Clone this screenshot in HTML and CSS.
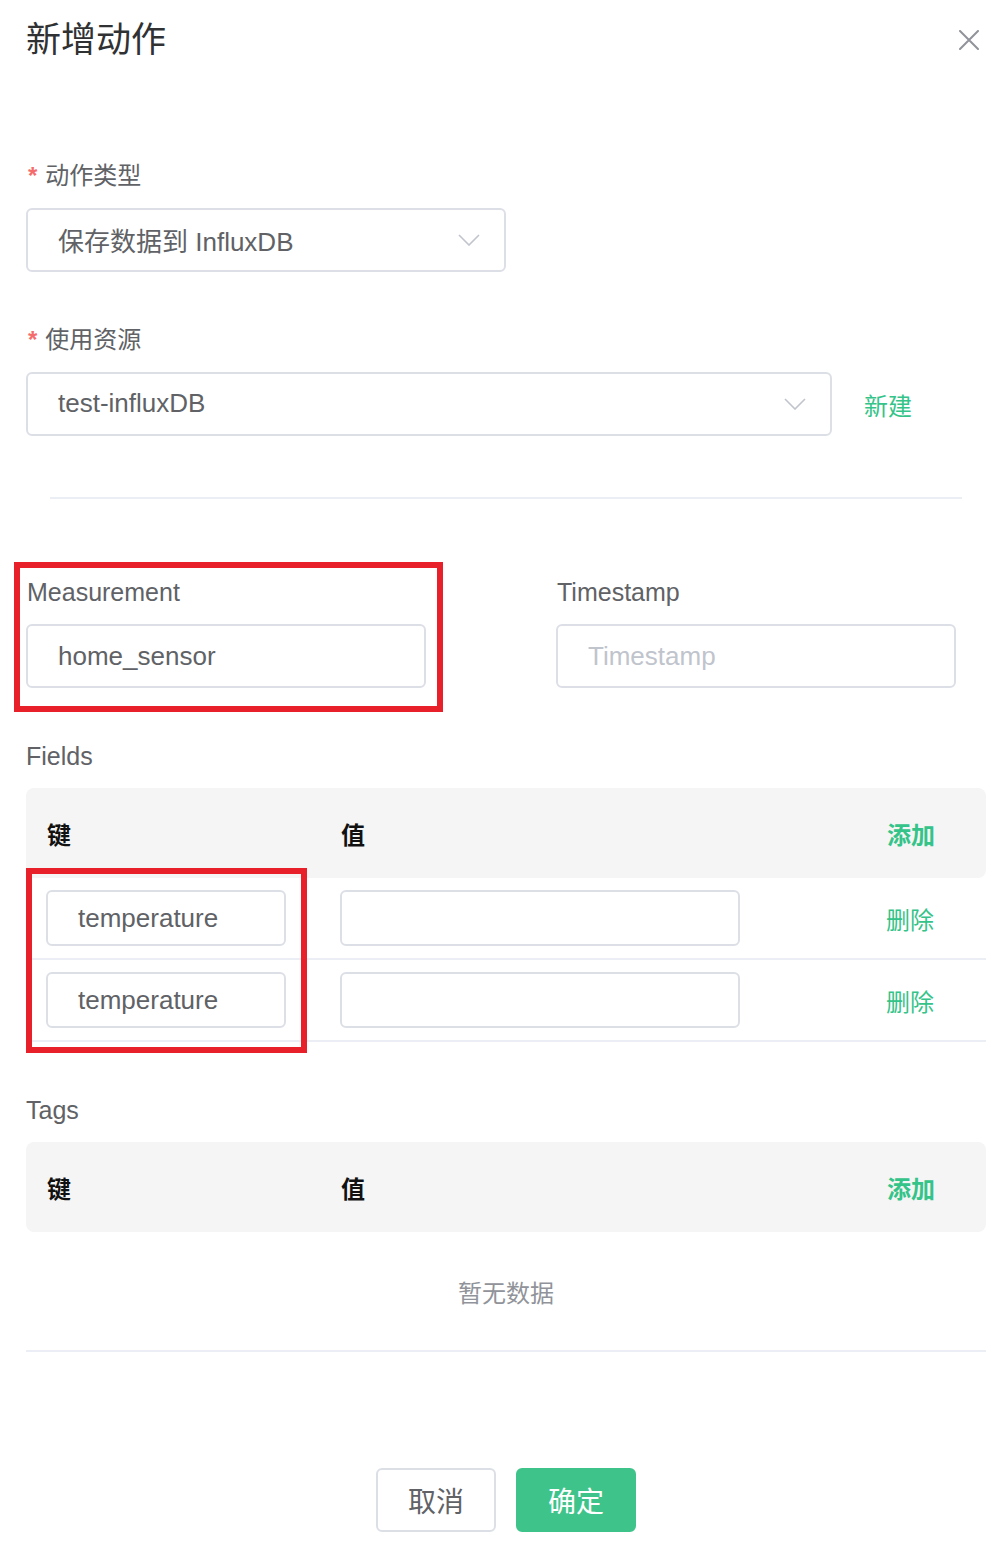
FILE: index.html
```html
<!DOCTYPE html>
<html lang="zh-CN">
<head>
<meta charset="utf-8">
<title>新增动作</title>
<link rel="stylesheet" href="styles.css">
</head>
<body>
<div class="dialog">
  <div class="dialog-header">
    <span class="dialog-title">新增动作</span>
    <span class="close">
      <svg width="20" height="20" viewBox="0 0 20 20"><path d="M1 1 L19 19 M19 1 L1 19" stroke="#909399" stroke-width="2" stroke-linecap="round" fill="none"/></svg>
    </span>
  </div>
  <div class="dialog-body">
    <div class="form-item">
      <div class="label cjk"><span class="star">*</span>动作类型</div>
      <div class="select select-type">
        <span>保存数据到 InfluxDB</span>
        <svg class="chevron" width="22" height="12" viewBox="0 0 22 12"><polyline points="1,1 11,11 21,1" stroke="#c0c4cc" stroke-width="1.6" fill="none"/></svg>
      </div>
    </div>
    <div class="form-item last">
      <div class="label cjk"><span class="star">*</span>使用资源</div>
      <div class="resource-row">
        <div class="select select-resource">
          <span>test-influxDB</span>
          <svg class="chevron" width="22" height="12" viewBox="0 0 22 12"><polyline points="1,1 11,11 21,1" stroke="#c0c4cc" stroke-width="1.6" fill="none"/></svg>
        </div>
        <span class="link new-link">新建</span>
      </div>
    </div>

    <div class="divider"></div>

    <div class="two-cols">
      <div class="col highlighted">
        <div class="label">Measurement</div>
        <div class="input"><span>home_sensor</span></div>
      </div>
      <div class="col">
        <div class="label">Timestamp</div>
        <div class="input"><span class="placeholder">Timestamp</span></div>
      </div>
    </div>

    <div class="label">Fields</div>
    <div class="kv-table fields-table">
      <div class="kv-head">
        <div class="cell th">键</div>
        <div class="cell th">值</div>
        <div class="cell"><span class="link strong">添加</span></div>
      </div>
      <div class="kv-row">
        <div class="cell"><div class="input small key"><span>temperature</span></div></div>
        <div class="cell"><div class="input small val"></div></div>
        <div class="cell"><span class="link">删除</span></div>
      </div>
      <div class="kv-row">
        <div class="cell"><div class="input small key"><span>temperature</span></div></div>
        <div class="cell"><div class="input small val"></div></div>
        <div class="cell"><span class="link">删除</span></div>
      </div>
      <div class="mark-box"></div>
    </div>

    <div class="label">Tags</div>
    <div class="kv-table tags-table">
      <div class="kv-head">
        <div class="cell th">键</div>
        <div class="cell th">值</div>
        <div class="cell"><span class="link strong">添加</span></div>
      </div>
      <div class="kv-empty">暂无数据</div>
    </div>

    <div class="footer">
      <button class="btn btn-cancel">取消</button>
      <button class="btn btn-primary">确定</button>
    </div>
  </div>
</div>
</body>
</html>
```
FILE: styles.css
```css
*, *::before, *::after { box-sizing: border-box; }
html, body {
  margin: 0;
  padding: 0;
  background: #fff;
  font-family: "Liberation Sans", "Noto Sans CJK SC", sans-serif;
}
.dialog {
  width: 1006px;
}
.dialog-header {
  height: 80px;
  padding: 20px 27px 0 26px;
  display: flex;
  justify-content: space-between;
  align-items: flex-start;
}
.dialog-title {
  font-size: 35px;
  line-height: 40px;
  color: #303133;
}
.close {
  display: flex;
  width: 20px;
  height: 20px;
  margin-top: 10px;
}
.dialog-body {
  padding: 76px 20px 0 26px;
}
.label {
  height: 40px;
  line-height: 40px;
  font-size: 25px;
  color: #606266;
  margin-bottom: 12px;
}
.label.cjk {
  font-size: 24px;
}
.star {
  color: #f56c6c;
  margin-right: 8px;
  margin-left: 2px;
  font-size: 24px;
  font-weight: 700;
}
.form-item {
  margin-bottom: 48px;
}
.form-item.last {
  margin-bottom: 0;
}
.select, .input {
  height: 64px;
  border: 2px solid #dcdfe6;
  border-radius: 6px;
  padding: 0 24px 0 30px;
  display: flex;
  align-items: center;
  justify-content: space-between;
  font-size: 26px;
  color: #606266;
}
.select span { position: relative; top: -1px; }
.select-type { width: 480px; }
.select-resource { width: 806px; }
.chevron { flex: none; }
.resource-row {
  display: flex;
  align-items: center;
}
.link {
  color: #34c388;
  font-size: 24px;
}
.new-link {
  margin-left: 32px;
}
.divider {
  height: 2px;
  background: #ebeef5;
  margin: 61px 24px 73px;
}
.two-cols {
  display: flex;
  gap: 130px;
  margin-bottom: 48px;
}
.col {
  width: 400px;
}
.col .label { padding-left: 1px; }
.placeholder { color: #c0c4cc; }
.highlighted { position: relative; }
.highlighted::after {
  content: "";
  position: absolute;
  left: -12px;
  top: -10px;
  width: 429px;
  height: 150px;
  border: 6px solid #e8202a;
}
.kv-table {
  width: 960px;
  position: relative;
  margin-bottom: 48px;
}
.kv-head, .kv-row {
  display: grid;
  grid-template-columns: 294px 546px 120px;
  align-items: center;
}
.kv-head {
  height: 90px;
  background: #f5f5f5;
  border-radius: 8px;
}
.kv-head .cell { padding-left: 21px; }
.th {
  font-size: 24px;
  font-weight: 700;
  color: #111;
}
.link.strong { font-weight: 700; }
.kv-row {
  padding: 12px 0;
  border-bottom: 2px solid #ebeef5;
}
.kv-row .cell { padding-left: 20px; }
.input.small {
  height: 56px;
}
.input.key { width: 240px; }
.input.val { width: 400px; }
.mark-box {
  position: absolute;
  left: 0;
  top: 80px;
  width: 281px;
  height: 185px;
  border: 6px solid #e8202a;
}
.kv-empty {
  height: 120px;
  border-bottom: 2px solid #ebeef5;
  display: flex;
  align-items: center;
  justify-content: center;
  font-size: 24px;
  color: #909399;
}
.tags-table { margin-bottom: 116px; }
.footer {
  display: flex;
  justify-content: center;
  gap: 20px;
}
.btn {
  width: 120px;
  height: 64px;
  border-radius: 6px;
  font-size: 28px;
  font-family: "Liberation Sans", "Noto Sans CJK SC", sans-serif;
  padding: 0;
}
.btn-cancel {
  background: #fff;
  border: 2px solid #dcdfe6;
  color: #606266;
}
.btn-primary {
  background: #3ec48a;
  border: 2px solid #3ec48a;
  color: #fff;
}
```
